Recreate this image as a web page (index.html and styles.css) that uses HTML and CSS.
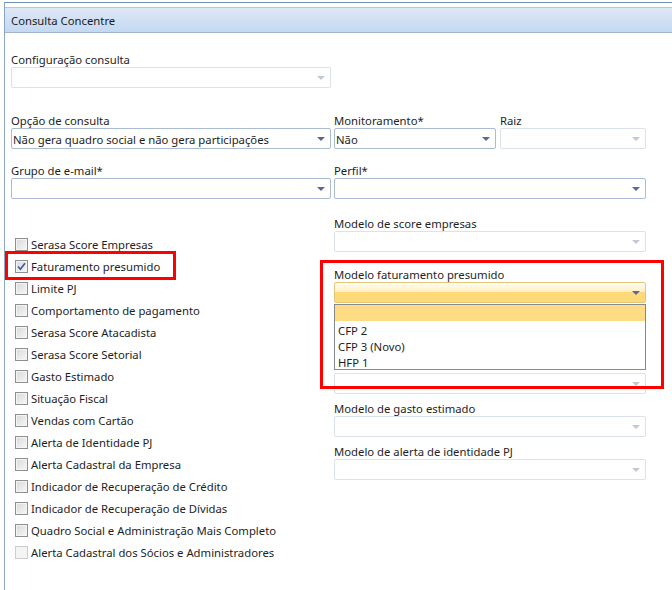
FILE: index.html
```html
<!DOCTYPE html>
<html lang="pt">
<head>
<meta charset="utf-8">
<link rel="stylesheet" href="styles.css">
</head>
<body>
<div class="panel">
  <div class="header">Consulta Concentre</div>
  <div class="form">
    <div class="top-grid">
      <div class="field c1 r1">
        <div class="label">Configuração consulta</div>
        <div class="combo disabled"><span class="value"></span><span class="arrow"></span></div>
      </div>

      <div class="field c1 r2">
        <div class="label">Opção de consulta</div>
        <div class="combo"><span class="value">Não gera quadro social e não gera participações</span><span class="arrow"></span></div>
      </div>
      <div class="pair c2 r2">
        <div class="field">
          <div class="label">Monitoramento*</div>
          <div class="combo"><span class="value">Não</span><span class="arrow"></span></div>
        </div>
        <div class="field">
          <div class="label">Raiz</div>
          <div class="combo disabled"><span class="value"></span><span class="arrow"></span></div>
        </div>
      </div>

      <div class="field c1 r3">
        <div class="label">Grupo de e-mail*</div>
        <div class="combo"><span class="value"></span><span class="arrow"></span></div>
      </div>
      <div class="field c2 r3">
        <div class="label">Perfil*</div>
        <div class="combo"><span class="value"></span><span class="arrow"></span></div>
      </div>
    </div>

    <div class="lower">
      <ul class="checks">
        <li class="check"><span class="box"></span>Serasa Score Empresas</li>
        <li class="check marked"><span class="box checked"><svg width="9" height="9" viewBox="0 0 9 9"><path d="M1 4.5 L3.4 7.2 L8 1.2" fill="none" stroke="#3f5a9a" stroke-width="1.7"/></svg></span>Faturamento presumido<span class="callout small"></span></li>
        <li class="check"><span class="box"></span>Limite PJ</li>
        <li class="check"><span class="box"></span>Comportamento de pagamento</li>
        <li class="check"><span class="box"></span>Serasa Score Atacadista</li>
        <li class="check"><span class="box"></span>Serasa Score Setorial</li>
        <li class="check"><span class="box"></span>Gasto Estimado</li>
        <li class="check"><span class="box"></span>Situação Fiscal</li>
        <li class="check"><span class="box"></span>Vendas com Cartão</li>
        <li class="check"><span class="box"></span>Alerta de Identidade PJ</li>
        <li class="check"><span class="box"></span>Alerta Cadastral da Empresa</li>
        <li class="check"><span class="box"></span>Indicador de Recuperação de Crédito</li>
        <li class="check"><span class="box"></span>Indicador de Recuperação de Dívidas</li>
        <li class="check"><span class="box"></span>Quadro Social e Administração Mais Completo</li>
        <li class="check off"><span class="box"></span>Alerta Cadastral dos Sócios e Administradores</li>
      </ul>

      <div class="rcol">
        <div class="field f-score">
          <div class="label">Modelo de score empresas</div>
          <div class="combo disabled"><span class="value"></span><span class="arrow"></span></div>
        </div>
        <div class="field f-fat">
          <div class="label">Modelo faturamento presumido</div>
          <div class="combo active"><span class="value"></span><span class="arrow"></span></div>
          <ul class="droplist">
            <li class="item hl">&nbsp;</li>
            <li class="item">CFP 2</li>
            <li class="item">CFP 3 (Novo)</li>
            <li class="item">HFP 1</li>
          </ul>
          <span class="callout big"></span>
        </div>
        <div class="field f-hidden">
          <div class="label"></div>
          <div class="combo disabled"><span class="value"></span><span class="arrow"></span></div>
        </div>
        <div class="field f-tight">
          <div class="label">Modelo de gasto estimado</div>
          <div class="combo disabled"><span class="value"></span><span class="arrow"></span></div>
        </div>
        <div class="field f-tight">
          <div class="label">Modelo de alerta de identidade PJ</div>
          <div class="combo disabled"><span class="value"></span><span class="arrow"></span></div>
        </div>
      </div>
    </div>
  </div>
</div>
</body>
</html>
```

FILE: styles.css
```css
html, body {
  margin: 0;
  padding: 0;
  background: #ffffff;
}
body {
  font-family: "Noto Sans", "Open Sans", sans-serif;
  font-size: 11.3px;
  color: #1e1e1e;
  width: 672px;
  height: 590px;
  overflow: hidden;
}
.panel {
  margin: 2px 0 0 4px;
  border-top: 1px solid #6d8fb6;
  border-left: 1px solid #8aa5c6;
  height: 600px;
  box-sizing: border-box;
}
.header {
  margin-top: 4px;
  border-top: 1px solid #bcc5cf;
  border-bottom: 1px solid #a3b5c9;
  height: 26px;
  box-sizing: border-box;
  background: linear-gradient(#dfe8f4, #c3d9f3);
  padding-left: 6px;
  line-height: 26px;
  color: #1b1b1b;
}
.form {
  padding: 17px 0 0 6px;
}
.top-grid {
  display: grid;
  grid-template-columns: 320px 312px;
  column-gap: 3px;
}
.c1 { grid-column: 1; }
.c2 { grid-column: 2; }
.r1 { grid-row: 1; }
.r2 { grid-row: 2; margin-top: 23px; }
.r3 { grid-row: 3; margin-top: 12px; }
.pair {
  display: grid;
  grid-template-columns: 162px 146px;
  column-gap: 4px;
}
.label {
  height: 16px;
  padding-top: 1px;
  line-height: 17px;
  white-space: nowrap;
}
.combo {
  position: relative;
  height: 21px;
  box-sizing: border-box;
  border: 1px solid #abbbd3;
  border-radius: 2px;
  background: #ffffff;
  display: flex;
  align-items: center;
  padding-left: 1px;
}
.combo .value {
  flex: 1;
  line-height: 17px;
  padding-top: 1px;
  white-space: nowrap;
  overflow: hidden;
}
.combo .arrow {
  width: 0;
  height: 0;
  border-left: 4px solid transparent;
  border-right: 4px solid transparent;
  border-top: 4px solid #5a6898;
  margin: 1px 5px 0 6px;
}
.combo.disabled {
  border-color: #dbe2eb;
}
.combo.disabled .arrow {
  border-top-color: #c3c9d3;
}
.combo.active {
  border-color: #e2c778;
  background: linear-gradient(#fffdf4 0%, #fff0c2 45%, #fed97a 50%, #fed97a 100%);
}
.lower {
  display: flex;
  margin-top: 15px;
}
.checks {
  list-style: none;
  margin: 19px 0 0 4px;
  padding: 0;
  width: 319px;
}
.check {
  position: relative;
  display: flex;
  align-items: center;
  height: 22px;
  white-space: nowrap;
}
.check .box {
  width: 13px;
  height: 13px;
  box-sizing: border-box;
  border: 1px solid #8e8f8f;
  background: linear-gradient(135deg, #d9d9d9, #f7f7f7);
  box-shadow: inset 0 0 0 1px #f4f4f4;
  margin-right: 3px;
  display: flex;
  align-items: center;
  justify-content: center;
}
.check.off .box {
  border-color: #cdcdcd;
  background: #f4f4f4;
  box-shadow: none;
}
.callout {
  position: absolute;
  border: 3px solid #ff0000;
  box-sizing: border-box;
  pointer-events: none;
}
.callout.small {
  left: -10px;
  top: -4px;
  width: 171px;
  height: 29px;
}
.rcol {
  width: 312px;
}
.field {
  position: relative;
}
.f-fat { margin-top: 13px; }
.f-hidden { margin-top: 53px; }
.f-tight { margin-top: 5px; }
.droplist {
  position: absolute;
  left: 0;
  top: 39px;
  width: 312px;
  height: 66px;
  box-sizing: border-box;
  margin: 0;
  padding: 0;
  list-style: none;
  border: 1px solid #848891;
  background: #ffffff;
  z-index: 2;
}
.item {
  height: 16px;
  line-height: 19px;
  padding-left: 3px;
}
.item.hl {
  background: #fddc83;
}
.callout.big {
  left: -14px;
  top: -5px;
  width: 344px;
  height: 129px;
  z-index: 3;
}
```
